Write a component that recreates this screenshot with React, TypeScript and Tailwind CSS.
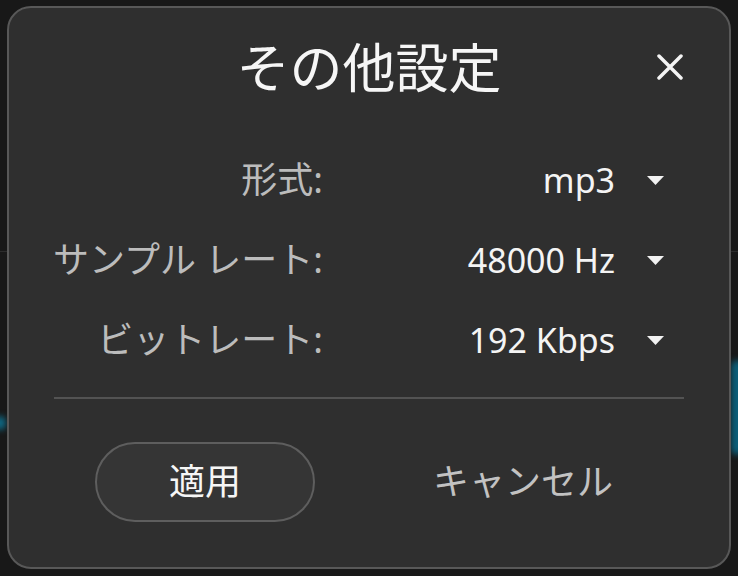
const font = { fontFamily: '"Noto Sans", "Noto Sans CJK JP", sans-serif' };

function Caret() {
    return (
        <svg width="17" height="9" viewBox="0 0 17 9" className="shrink-0">
            <polygon points="0,0 17,0 8.5,9" fill="#f2f2f2" />
        </svg>
    );
}

function Row({ label, value }: { label: string; value: string }) {
    return (
        <div className="flex h-[80px] items-center">
            <div className="w-[314px] text-right text-[36px] leading-none text-[#bcbcbc]">{label}</div>
            <div className="w-[292px] text-right text-[34px] leading-none text-[#f4f4f4]">{value}</div>
            <div className="ml-[32px] flex items-center">
                <Caret />
            </div>
        </div>
    );
}

export default function App() {
    return (
        <div className="relative h-[576px] w-[738px] overflow-hidden bg-[#181818] px-[7px] pt-[6px]" style={font}>
            {/* page behind the dialog */}
            <div className="absolute left-0 top-[251px] h-px w-full bg-[#2c2c2c]" />
            <div className="absolute -left-[6px] top-[416px] h-[14px] w-[12px] rounded-full bg-[#0e6a86] blur-[3px]" />
            <div className="absolute -right-[6px] top-[360px] h-[95px] w-[13px] rounded-full bg-[#0c5f7a] blur-[3px]" />

            <div className="relative h-[563px] w-[724px] rounded-[24px] border-2 border-[#585858] bg-[#2f2f2f]">
                <div className="relative flex h-[118px] items-center justify-center">
                    <h1 className="text-[53px] font-normal leading-none text-[#f6f6f6]">その他設定</h1>
                    <button className="absolute right-[46px] top-[46px] flex h-[26px] w-[26px] items-center justify-center">
                        <svg width="26" height="26" viewBox="0 0 26 26">
                            <path d="M2 2 L24 24 M24 2 L2 24" stroke="#f4f4f4" strokeWidth="3.5" strokeLinecap="round" />
                        </svg>
                    </button>
                </div>

                <div className="mt-[14px] flex flex-col">
                    <Row label="形式:" value="mp3" />
                    <Row label="サンプル レート:" value="48000 Hz" />
                    <Row label="ビットレート:" value="192 Kbps" />
                </div>

                <div className="mx-[45px] mt-[17px] h-[2px] bg-[#535353]" />

                <div className="mt-[43px] flex items-center pl-[86px]">
                    <button className="flex h-[80px] w-[220px] items-center justify-center rounded-full border-2 border-[#5e5e5e] bg-[#353535] text-[36px] leading-none text-[#f6f6f6]">
                        適用
                    </button>
                    <button className="ml-[98px] flex h-[80px] w-[220px] items-center justify-center text-[36px] leading-none text-[#c2c2c2]">
                        キャンセル
                    </button>
                </div>
            </div>
        </div>
    );
}
